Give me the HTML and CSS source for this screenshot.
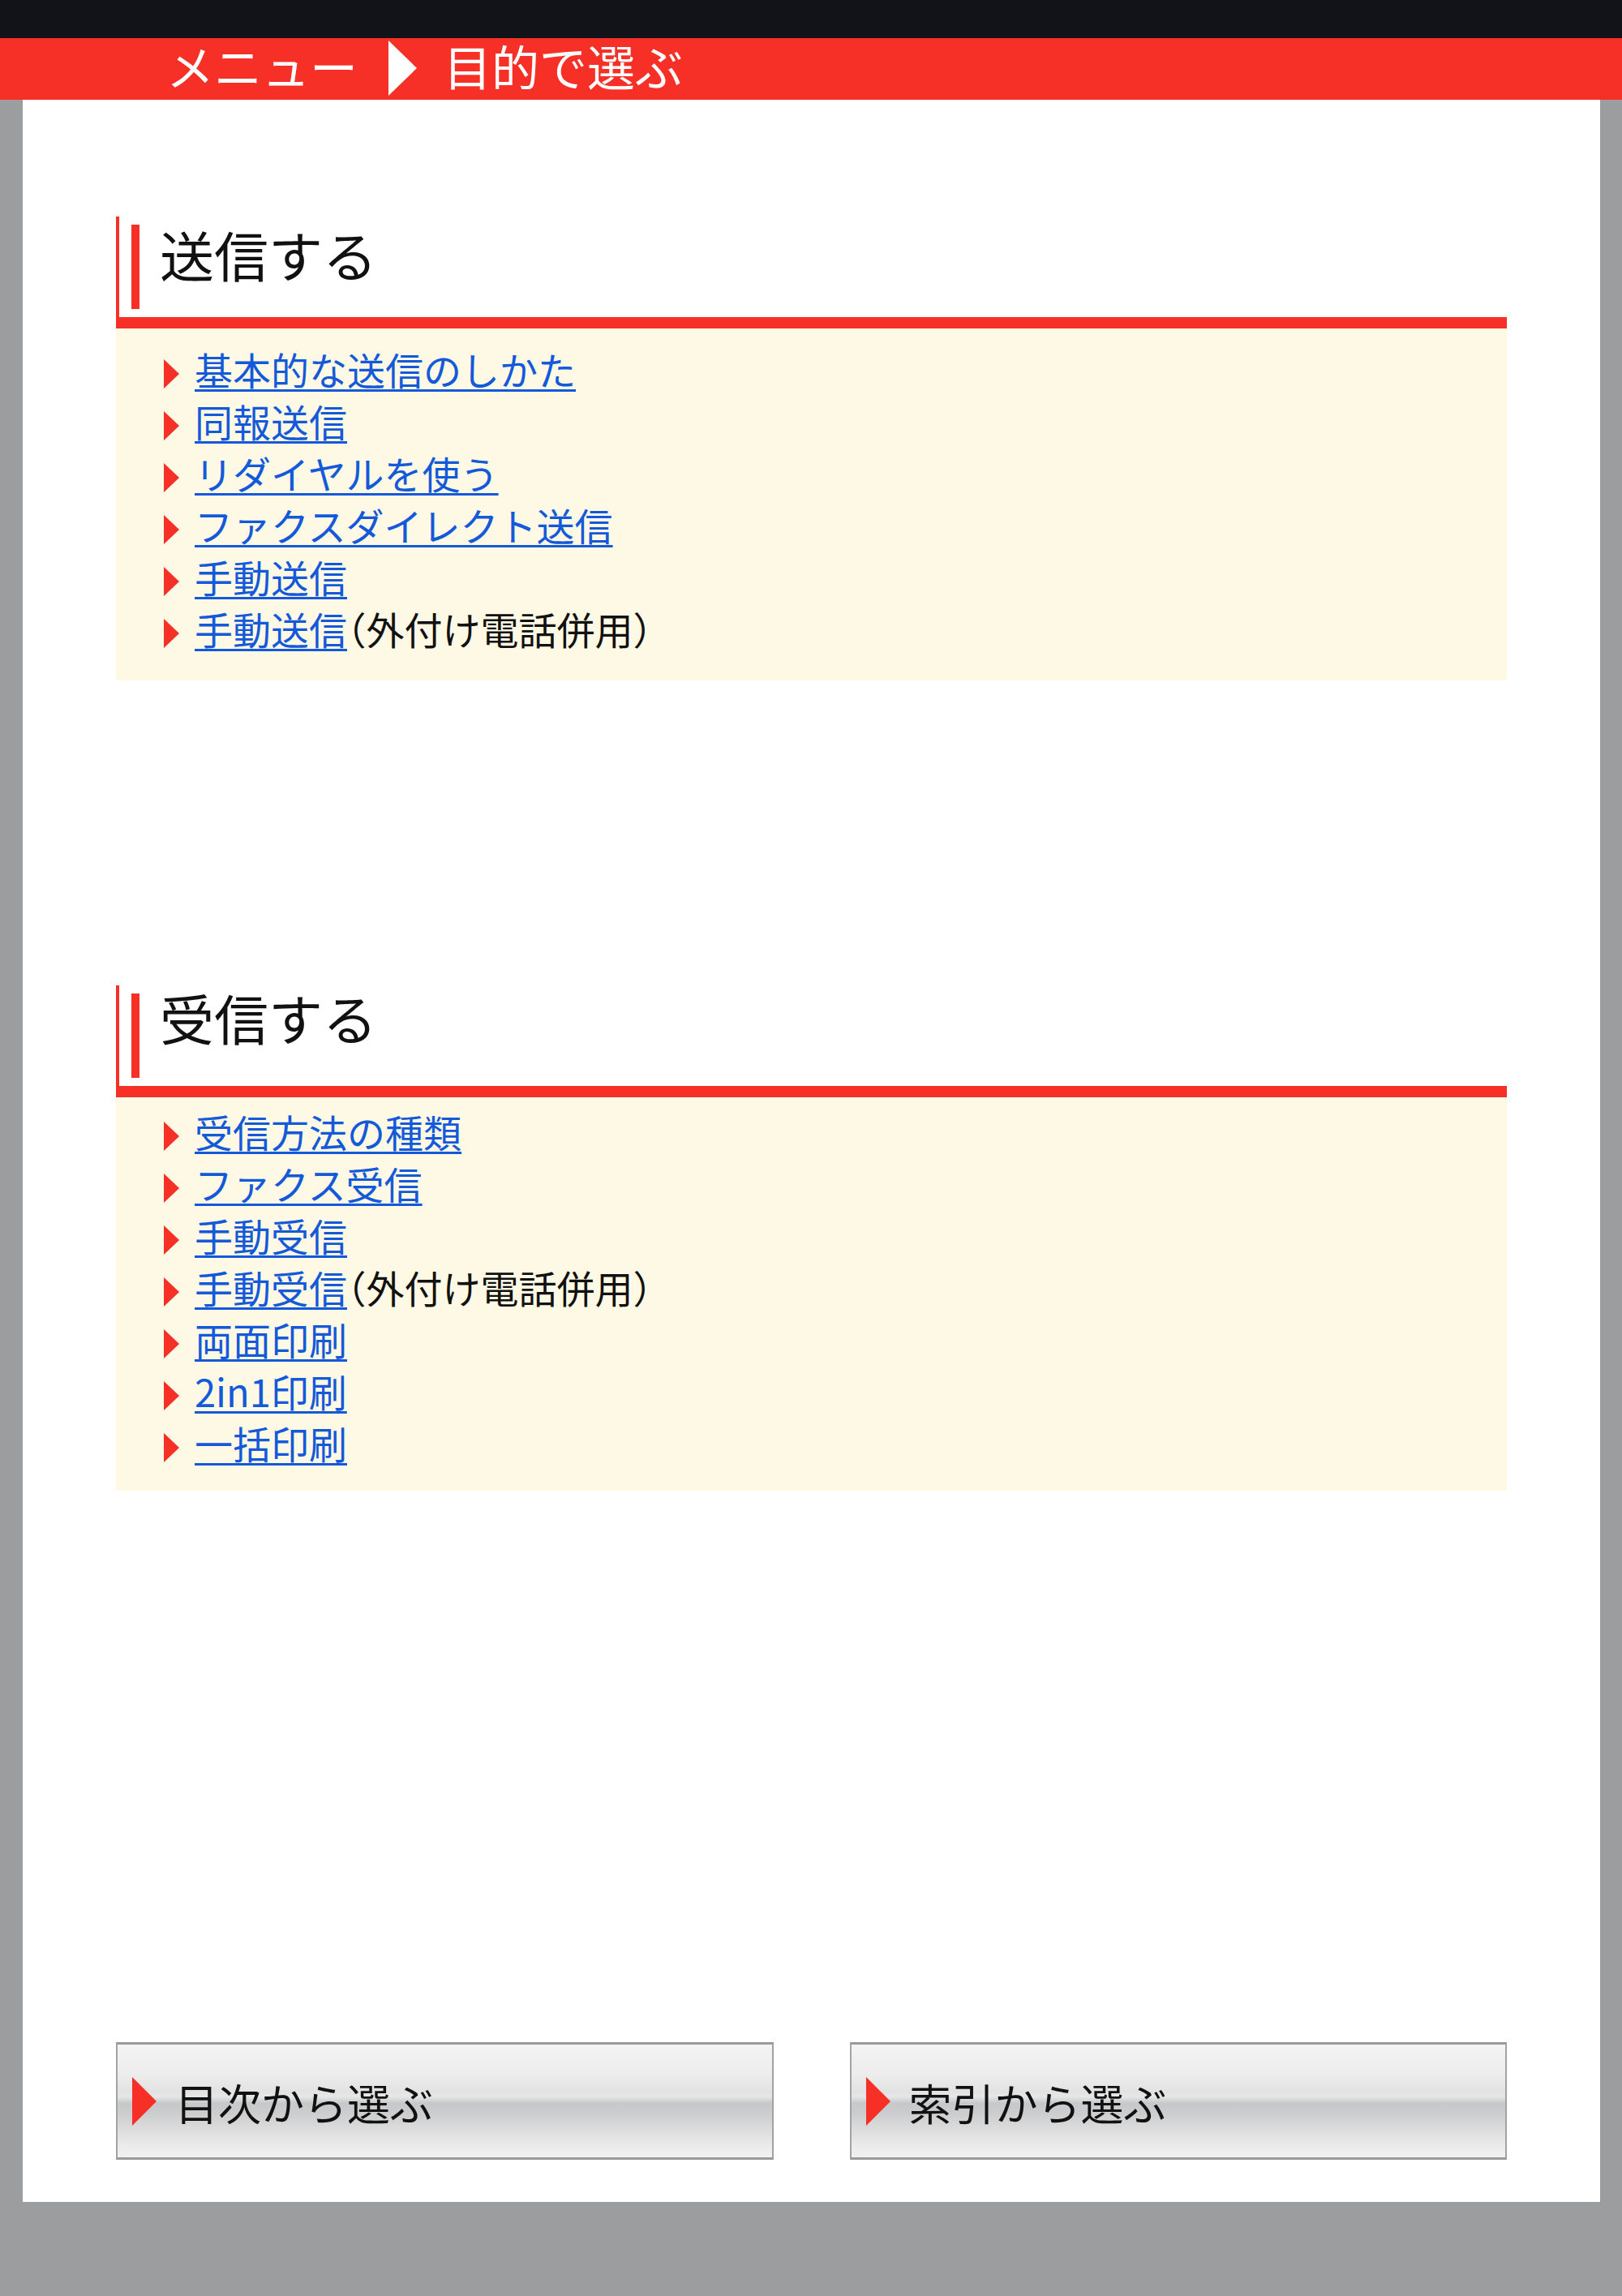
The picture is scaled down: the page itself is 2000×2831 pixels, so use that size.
FILE: index.html
```html
<!DOCTYPE html>
<html lang="ja">
<head>
<meta charset="utf-8">
<title>目的で選ぶ</title>
<link rel="stylesheet" href="styles.css">
</head>
<body>
<div class="topbar"></div>
<div class="titlebar">
  <span class="crumb">メニュー</span>
  <span class="crumb-arrow"></span>
  <span class="crumb">目的で選ぶ</span>
</div>
<div class="page">
  <section class="sec sec-send">
    <div class="sec-head">
      <span class="sec-bar"></span>
      <h2 class="sec-title">送信する</h2>
    </div>
    <ul class="links">
      <li><span class="mark"></span><span class="txt"><a href="#">基本的な送信のしかた</a></span></li>
      <li><span class="mark"></span><span class="txt"><a href="#">同報送信</a></span></li>
      <li><span class="mark"></span><span class="txt"><a href="#">リダイヤルを使う</a></span></li>
      <li><span class="mark"></span><span class="txt"><a href="#">ファクスダイレクト送信</a></span></li>
      <li><span class="mark"></span><span class="txt"><a href="#">手動送信</a></span></li>
      <li><span class="mark"></span><span class="txt"><a href="#">手動送信</a><span class="note">（外付け電話併用）</span></span></li>
    </ul>
  </section>
  <section class="sec sec-recv">
    <div class="sec-head">
      <span class="sec-bar"></span>
      <h2 class="sec-title sec-title-recv">受信する</h2>
    </div>
    <ul class="links links-recv">
      <li><span class="mark"></span><span class="txt"><a href="#">受信方法の種類</a></span></li>
      <li><span class="mark"></span><span class="txt"><a href="#">ファクス受信</a></span></li>
      <li><span class="mark"></span><span class="txt"><a href="#">手動受信</a></span></li>
      <li><span class="mark"></span><span class="txt"><a href="#">手動受信</a><span class="note">（外付け電話併用）</span></span></li>
      <li><span class="mark"></span><span class="txt"><a href="#">両面印刷</a></span></li>
      <li><span class="mark"></span><span class="txt"><a href="#">2in1印刷</a></span></li>
      <li><span class="mark"></span><span class="txt"><a href="#">一括印刷</a></span></li>
    </ul>
  </section>
  <div class="buttons">
    <a class="btn" href="#"><span class="btn-mark"></span><span class="btn-label">目次から選ぶ</span></a>
    <a class="btn" href="#"><span class="btn-mark"></span><span class="btn-label">索引から選ぶ</span></a>
  </div>
</div>
</body>
</html>
```

FILE: styles.css
```css
html, body {
  margin: 0;
  padding: 0;
}
body {
  background: #9c9d9f;
  font-family: "Noto Sans CJK JP", "Noto Sans", sans-serif;
  min-height: 2831px;
}
.topbar {
  height: 47px;
  background: #121318;
}
.titlebar {
  height: 76px;
  background: #f62f27;
  display: flex;
  align-items: center;
  padding-left: 205px;
  color: #fff;
  font-size: 59px;
  line-height: 76px;
}
.crumb {
  display: block;
  margin-top: -8px;
}
.crumb-arrow {
  display: block;
  width: 0;
  height: 0;
  border-left: 35px solid #fff;
  border-top: 34px solid transparent;
  border-bottom: 34px solid transparent;
  margin: -3px 33px 0 38px;
}
.page {
  background: #fff;
  margin: 0 27px 0 28px;
  padding: 0 115px 52px 115px;
}
.sec-send {
  padding-top: 144px;
}
.sec-recv {
  padding-top: 376px;
}
.sec-head {
  border-left: 4px solid #f62f27;
  border-bottom: 14px solid #f62f27;
  padding: 10px 0 10px 15px;
  display: flex;
  align-items: flex-start;
}
.sec-bar {
  display: block;
  width: 10px;
  height: 104px;
  background: #f62f27;
  flex: none;
}
.sec-title {
  margin: 0 0 0 25px;
  font-size: 67px;
  line-height: 72px;
  font-weight: normal;
  color: #111;
}
.sec-title-recv {
  margin-top: -7px;
}
.links {
  list-style: none;
  margin: 0;
  background: #fef9e4;
  padding: 18px 0 32px 59px;
  font-size: 47px;
  line-height: 64px;
  color: #111;
}
.links-recv {
  padding-top: 10px;
  padding-bottom: 27px;
}
.links li {
  display: flex;
  align-items: center;
  height: 64px;
}
.mark {
  display: block;
  width: 0;
  height: 0;
  border-left: 19px solid #f62f27;
  border-top: 18px solid transparent;
  border-bottom: 18px solid transparent;
  margin: 12px 19px 0 0;
  flex: none;
}
.txt {
  white-space: nowrap;
}
.note {
  font-feature-settings: "halt";
}
.links a {
  color: #1459d9;
  text-decoration: underline;
  text-decoration-thickness: 3px;
  text-underline-offset: 5px;
}
.buttons {
  padding-top: 680px;
  display: grid;
  grid-template-columns: 1fr 1fr;
  column-gap: 94px;
}
.btn {
  display: flex;
  align-items: center;
  height: 139px;
  border-top: 3px solid #9a9a9a;
  border-bottom: 3px solid #9a9a9a;
  border-left: 2px solid #a3a3a3;
  border-right: 2px solid #a3a3a3;
  background: linear-gradient(to bottom, #f4f4f4 0%, #ececec 28%, #e2e2e3 42%, #e7e7e7 46%, #c7c8ca 52%, #cbcccd 60%, #dcdcdd 75%, #ebebeb 90%, #f1f1f1 100%);
  padding-left: 18px;
  color: #111;
  text-decoration: none;
}
.btn-mark {
  display: block;
  width: 0;
  height: 0;
  border-left: 30px solid #f62f27;
  border-top: 30px solid transparent;
  border-bottom: 30px solid transparent;
  flex: none;
}
.btn-label {
  margin-left: 23px;
  font-size: 53px;
  line-height: 60px;
  margin-top: 3px;
}
```
